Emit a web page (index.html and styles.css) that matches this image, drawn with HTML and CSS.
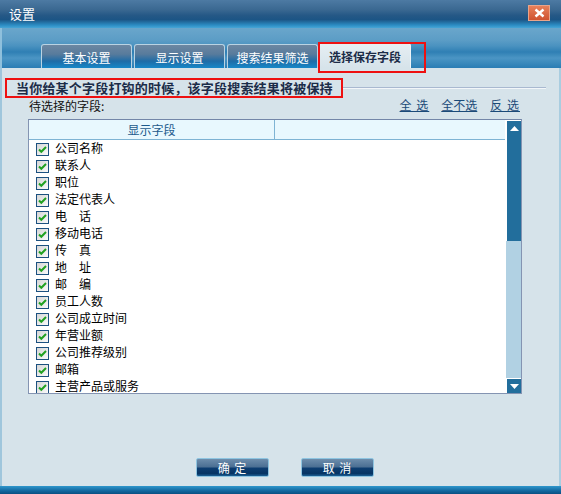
FILE: index.html
```html
<!DOCTYPE html>
<html>
<head>
<meta charset="utf-8">
<link rel="stylesheet" href="styles.css">
</head>
<body>
<div class="window">
  <div class="titlebar">
    <span class="title">设置</span>
    <span class="close">
      <svg width="11" height="10" viewBox="0 0 11 10"><path d="M1.5 1.5 L9.5 8.5 M9.5 1.5 L1.5 8.5" stroke="#fff" stroke-width="2.4" fill="none"/></svg>
    </span>
  </div>
  <div class="tabstrip">
    <div class="tab">基本设置</div>
    <div class="tab">显示设置</div>
    <div class="tab">搜索结果筛选</div>
    <div class="tab active">选择保存字段</div>
  </div>
  <div class="content">
    <div class="warnrow">
      <div class="warn">当你给某个字段打钩的时候，该字段搜索结果将被保持</div>
      <div class="warnline"></div>
    </div>
    <div class="labelrow">
      <span class="label">待选择的字段:</span>
      <span class="links"><a class="wide">全 选</a><a>全不选</a><a class="wide">反 选</a></span>
    </div>
    <div class="listbox">
      <div class="listmain">
        <div class="listhead">
          <div class="col1">显示字段</div>
          <div class="col2"></div>
        </div>
        <div class="rows">
          <div class="row"><span class="cb"></span><span class="rt">公司名称</span></div>
          <div class="row"><span class="cb"></span><span class="rt">联系人</span></div>
          <div class="row"><span class="cb"></span><span class="rt">职位</span></div>
          <div class="row"><span class="cb"></span><span class="rt">法定代表人</span></div>
          <div class="row"><span class="cb"></span><span class="rt">电　话</span></div>
          <div class="row"><span class="cb"></span><span class="rt">移动电话</span></div>
          <div class="row"><span class="cb"></span><span class="rt">传　真</span></div>
          <div class="row"><span class="cb"></span><span class="rt">地　址</span></div>
          <div class="row"><span class="cb"></span><span class="rt">邮　编</span></div>
          <div class="row"><span class="cb"></span><span class="rt">员工人数</span></div>
          <div class="row"><span class="cb"></span><span class="rt">公司成立时间</span></div>
          <div class="row"><span class="cb"></span><span class="rt">年营业额</span></div>
          <div class="row"><span class="cb"></span><span class="rt">公司推荐级别</span></div>
          <div class="row"><span class="cb"></span><span class="rt">邮箱</span></div>
          <div class="row"><span class="cb"></span><span class="rt">主营产品或服务</span></div>
        </div>
      </div>
      <div class="scrollbar">
        <div class="sbtn"><svg width="9" height="5" viewBox="0 0 9 5"><path d="M4.5 0 L9 5 L0 5 Z" fill="#fff"/></svg></div>
        <div class="thumb"></div>
        <div class="track"></div>
        <div class="sbtn"><svg width="9" height="5" viewBox="0 0 9 5"><path d="M0 0 L9 0 L4.5 5 Z" fill="#fff"/></svg></div>
      </div>
    </div>
    <div class="buttons">
      <div class="btn">确 定</div>
      <div class="btn">取 消</div>
    </div>
  </div>
  <div class="bottomband"></div>
</div>
</body>
</html>
```
FILE: styles.css
```css
html, body {
  margin: 0;
  padding: 0;
}
body {
  width: 561px;
  height: 494px;
  overflow: hidden;
  font-family: "Noto Sans CJK SC", "DejaVu Sans", sans-serif;
  font-size: 12px;
}
.window {
  width: 561px;
  height: 494px;
  display: flex;
  flex-direction: column;
  background: #d6e3ea;
}
.titlebar {
  height: 28px;
  flex: none;
  display: flex;
  align-items: center;
  justify-content: space-between;
  padding: 0 11px 0 9px;
  background: linear-gradient(#4d7aa3 0%, #3a6891 35%, #255886 55%, #1c5585 70%, #2c8dc4 90%, #47a6d6 100%);
}
.title {
  color: #fff;
  font-size: 13px;
  line-height: 14px;
  margin-top: -1px;
}
.close {
  width: 22px;
  height: 16px;
  margin-top: -2px;
  display: flex;
  align-items: center;
  justify-content: center;
  background: linear-gradient(#e7805a, #cf5330);
  border: 1px solid #e9a48a;
  box-sizing: border-box;
}
.tabstrip {
  height: 40px;
  flex: none;
  display: flex;
  align-items: flex-end;
  gap: 2px;
  padding-left: 39px;
  border-left: 2px solid #8fc0dc;
  background: linear-gradient(#6aa6cb 0%, #5c9dc6 30%, #4a92c0 45%, #2f7fb4 60%, #4b95c4 75%, #2a7db4 100%);
}
.tab {
  width: 91px;
  height: 24px;
  box-sizing: border-box;
  display: flex;
  align-items: center;
  justify-content: center;
  color: #fff;
  border: 1px solid #b9d3e3;
  border-bottom: none;
  border-radius: 3px 3px 0 0;
  background: linear-gradient(#6c87a2 0%, #587b9c 40%, #1f6ca6 70%, #1788c8 100%);
  padding-top: 1px;
}
.tab.active {
  width: 92px;
  height: 25px;
  position: relative;
  margin-left: -1px;
  color: #1c2c48;
  font-weight: bold;
  background: linear-gradient(#e6eef3, #d6e3ea);
  border-color: #eef4f8;
}
.tab.active::after {
  content: "";
  position: absolute;
  left: -2px;
  top: -2px;
  width: 108px;
  height: 31px;
  border: 2px solid #ee1111;
  box-sizing: border-box;
}
.content {
  flex: 1;
  display: flex;
  flex-direction: column;
  border-left: 2px solid #9fc6dc;
  border-right: 2px solid #a9cde0;
}
.warnrow {
  display: flex;
  align-items: center;
  margin-top: 10px;
  margin-left: 3px;
  width: 541px;
}
.warn {
  height: 20px;
  width: 338px;
  box-sizing: border-box;
  border: 2px solid #ee1111;
  color: #1c2c48;
  font-weight: bold;
  font-size: 13px;
  line-height: 15px;
  padding-left: 9px;
  letter-spacing: 0.2px;
  white-space: nowrap;
  overflow: hidden;
}
.warnline {
  flex: 1;
  height: 0;
  border-top: 1px solid #a9b9d0;
  border-bottom: 1px solid #f2f6f9;
}
.labelrow {
  display: flex;
  justify-content: space-between;
  align-items: center;
  height: 18px;
  margin: -1px 0 0 27px;
  width: 490px;
  line-height: 16px;
}
.label {
  color: #111;
  margin-top: 0;
}
.links {
  display: flex;
  gap: 13px;
  margin-top: -3px;
}
.links a {
  color: #1b4a78;
  text-decoration: underline;
  cursor: pointer;
}
.links a.wide {
  letter-spacing: 1px;
  margin-right: -1px;
}
.listbox {
  margin: 4px 0 0 26px;
  width: 494px;
  height: 275px;
  box-sizing: border-box;
  border: 1px solid #8494b2;
  border-top-color: #7386a8;
  display: flex;
  background: #fff;
  overflow: hidden;
}
.listmain {
  flex: 1;
  display: flex;
  flex-direction: column;
  overflow: hidden;
}
.listhead {
  height: 20px;
  flex: none;
  display: flex;
  background: #e8f8fe;
  border-bottom: 1px solid #7eb4d4;
  box-sizing: border-box;
}
.col1 {
  width: 245px;
  border-right: 1px solid #7eb4d4;
  display: flex;
  align-items: center;
  justify-content: center;
  color: #1e5a8c;
  line-height: 14px;
}
.col2 {
  flex: 1;
}
.rows {
  display: flex;
  flex-direction: column;
}
.row {
  height: 17px;
  display: flex;
  align-items: center;
  gap: 6px;
  padding-left: 7px;
  color: #000;
  white-space: nowrap;
}
.rt {
  line-height: 13px;
  margin-top: -2px;
}
.cb {
  width: 13px;
  height: 13px;
  box-sizing: border-box;
  border: 1px solid #1c5180;
  background-color: #e6e6e6;
  background-image: url("data:image/svg+xml;utf8,<svg xmlns='http://www.w3.org/2000/svg' width='11' height='11' viewBox='0 0 11 11'><path d='M2 5.5 L4.3 7.8 L9 3' stroke='%2321a121' stroke-width='2' fill='none'/></svg>"), linear-gradient(135deg, #d6d6d6, #fafafa);
  background-repeat: no-repeat;
  flex: none;
  margin-top: 1px;
}
.scrollbar {
  width: 15px;
  flex: none;
  display: flex;
  flex-direction: column;
  background: #b1d1e3;
  border-left: 1px solid #fff;
}
.sbtn {
  height: 15px;
  flex: none;
  background: #226e9c;
  border-top: 1px solid #fff;
  border-left: 1px solid #fff;
  box-sizing: border-box;
  display: flex;
  align-items: center;
  justify-content: center;
}
.thumb {
  height: 106px;
  flex: none;
  background: #226e9c;
  border-left: 1px solid #fff;
  box-sizing: border-box;
}
.track {
  flex: 1;
}
.buttons {
  display: flex;
  justify-content: center;
  gap: 32px;
  margin-top: 64px;
  padding-left: 9px;
}
.btn {
  width: 73px;
  height: 19px;
  box-sizing: border-box;
  border: 1px solid #8ec4e0;
  border-radius: 2px;
  background: linear-gradient(#6d8dac 0%, #4c7094 45%, #0d3d70 55%, #063463 85%, #1c5f94 100%);
  color: #fff;
  display: flex;
  align-items: center;
  justify-content: center;
  letter-spacing: 1px;
  line-height: 14px;
}
.bottomband {
  height: 8px;
  flex: none;
  background: linear-gradient(#2f97cc, #13679f 60%, #0b4f82);
}
```
